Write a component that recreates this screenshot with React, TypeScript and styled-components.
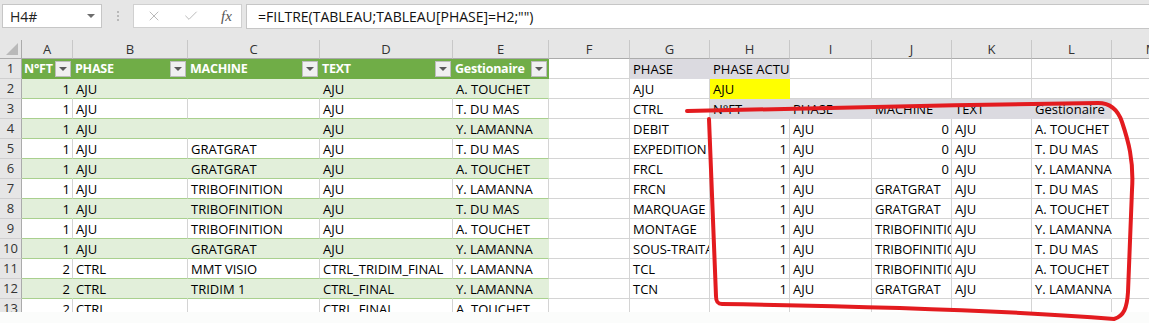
import React from 'react';
import styled, { createGlobalStyle } from 'styled-components';
import { X, Check } from 'lucide-react';

const GREEN = '#70ad47';
const BAND = '#e2efda';
const GREEN_LINE = '#a9d08e';
const GRID = '#d4d4d4';
const GRAY = '#dbdae0';
const YELLOW = '#ffff00';

const GlobalStyle = createGlobalStyle`
  html, body { margin: 0; padding: 0; background: #fbfcfb; }
  body { font-family: "Open Sans", "Noto Sans", sans-serif; }
  #root { width: 1149px; height: 323px; overflow: hidden; }
`;

const Page = styled.div`
  position: relative;
  width: 1149px;
  height: 323px;
  overflow: hidden;
  background: #fbfcfb;
`;

const Toolbar = styled.div`
  height: 40px;
  background: #e6e6e6;
  display: flex;
  align-items: flex-start;
  padding-top: 4px;
  box-sizing: border-box;
`;

const NameBox = styled.div`
  margin-left: 2px;
  width: 100px;
  height: 24px;
  box-sizing: border-box;
  background: #fff;
  border: 1px solid #c6c6c6;
  display: flex;
  align-items: center;
  justify-content: space-between;
  padding: 0 6px 0 7px;
  font-size: 14px;
  color: #222;
`;

const SmallArrow = styled.span`
  width: 0;
  height: 0;
  border-left: 4px solid transparent;
  border-right: 4px solid transparent;
  border-top: 4px solid #6d6d6d;
`;

const Grip = styled.div`
  width: 31px;
  height: 24px;
  display: flex;
  flex-direction: column;
  align-items: center;
  justify-content: center;
  gap: 2px;
`;

const Dot = styled.span`
  width: 2px;
  height: 2px;
  background: #b9b9b9;
`;

const ActionBox = styled.div`
  width: 109px;
  height: 24px;
  box-sizing: border-box;
  background: #fff;
  border: 1px solid #d0d0d0;
  display: flex;
  align-items: center;
  padding-left: 12px;
  gap: 21px;
  color: #b5b5b5;
`;

const Fx = styled.span`
  font-family: "Liberation Serif", serif;
  font-style: italic;
  font-size: 15px;
  color: #555;
  margin-left: 1px;
`;

const FormulaInput = styled.div`
  margin-left: 4px;
  flex: 1;
  height: 25px;
  box-sizing: border-box;
  background: #fff;
  border: 1px solid #c6c6c6;
  border-right: none;
  display: flex;
  align-items: center;
  padding-left: 11px;
  font-size: 14px;
  color: #111;
  white-space: nowrap;
`;

const Sheet = styled.div`
  display: grid;
  grid-template-columns: 22px 51px 115px 132px 133px 96px 81px 80px 80px 82px 80px 80px 80px 80px;
  grid-template-rows: 19px;
  grid-auto-rows: 20px;
  height: 272px;
  overflow: hidden;
  background: #fff;
`;

const Corner = styled.div`
  background: #e6e6e6;
  border-right: 1px solid #ababab;
  border-bottom: 1px solid #ababab;
  box-sizing: border-box;
  display: flex;
  align-items: flex-end;
  justify-content: flex-end;
  padding: 0 3px 3px 0;
`;

const CornerMark = styled.span`
  width: 0;
  height: 0;
  border-left: 12px solid transparent;
  border-bottom: 12px solid #b9b9b9;
`;

const ColHead = styled.div`
  background: #e6e6e6;
  border-right: 1px solid #c8c8c8;
  border-bottom: 1px solid #ababab;
  box-sizing: border-box;
  text-align: center;
  font-size: 13px;
  line-height: 18px;
  color: #333;
`;

const RowHead = styled.div`
  background: #e6e6e6;
  border-right: 1px solid #ababab;
  border-bottom: 1px solid #cfcfcf;
  box-sizing: border-box;
  text-align: center;
  font-size: 13px;
  line-height: 19px;
  color: #333;
`;

type CellProps = {
  $bg?: string;
  $right?: string;
  $bottom?: string;
  $align?: 'left' | 'right';
  $bold?: boolean;
  $fg?: string;
  $spill?: boolean;
};

const Cell = styled.div<CellProps>`
  box-sizing: border-box;
  background: ${(p) => p.$bg || '#fff'};
  border-right: 1px solid ${(p) => p.$right || GRID};
  border-bottom: 1px solid ${(p) => p.$bottom || GRID};
  padding: 0 2px 0 3px;
  font-size: 13px;
  line-height: 20px;
  white-space: nowrap;
  overflow: ${(p) => (p.$spill ? 'visible' : 'hidden')};
  text-align: ${(p) => p.$align || 'left'};
  font-weight: ${(p) => (p.$bold ? 700 : 400)};
  color: ${(p) => p.$fg || '#000'};
`;

const HeadCell = styled(Cell)`
  display: flex;
  align-items: flex-start;
  justify-content: space-between;
  padding-right: 1px;
  padding-left: 2px;
  font-size: 12.5px;
  letter-spacing: -0.25px;
`;

const FilterBtn = styled.span`
  flex: none;
  margin-top: 2px;
  width: 16px;
  height: 16px;
  box-sizing: border-box;
  background: #f0f0f0;
  border: 1px solid #bdbdbd;
  display: flex;
  align-items: center;
  justify-content: center;
`;

const FilterArrow = styled.span`
  width: 0;
  height: 0;
  border-left: 4px solid transparent;
  border-right: 4px solid transparent;
  border-top: 4px solid #5a5a5a;
`;

const Annotation = styled.svg`
  position: absolute;
  left: 0;
  top: 0;
  pointer-events: none;
`;

type Spec = {
  text?: string | number;
  align?: 'left' | 'right';
  bg?: string;
  right?: string;
  bottom?: string;
  bold?: boolean;
  fg?: string;
  spill?: boolean;
  filter?: boolean;
};

const LETTERS = ['A', 'B', 'C', 'D', 'E', 'F', 'G', 'H', 'I', 'J', 'K', 'L', 'M'];

const HEADERS = ['N°FT', 'PHASE', 'MACHINE', 'TEXT', 'Gestionaire'];

const LEFT_DATA: (string | number)[][] = [
  [1, 'AJU', '', 'AJU', 'A. TOUCHET'],
  [1, 'AJU', '', 'AJU', 'T. DU MAS'],
  [1, 'AJU', '', 'AJU', 'Y. LAMANNA'],
  [1, 'AJU', 'GRATGRAT', 'AJU', 'T. DU MAS'],
  [1, 'AJU', 'GRATGRAT', 'AJU', 'A. TOUCHET'],
  [1, 'AJU', 'TRIBOFINITION', 'AJU', 'Y. LAMANNA'],
  [1, 'AJU', 'TRIBOFINITION', 'AJU', 'T. DU MAS'],
  [1, 'AJU', 'TRIBOFINITION', 'AJU', 'A. TOUCHET'],
  [1, 'AJU', 'GRATGRAT', 'AJU', 'Y. LAMANNA'],
  [2, 'CTRL', 'MMT VISIO', 'CTRL_TRIDIM_FINAL', 'Y. LAMANNA'],
  [2, 'CTRL', 'TRIDIM 1', 'CTRL_FINAL', 'Y. LAMANNA'],
  [2, 'CTRL', '', 'CTRL_FINAL', 'A. TOUCHET'],
];

const PHASES = ['PHASE', 'AJU', 'CTRL', 'DEBIT', 'EXPEDITION', 'FRCL', 'FRCN', 'MARQUAGE', 'MONTAGE', 'SOUS-TRAITANCE', 'TCL', 'TCN', ''];

const RESULT: (string | number)[][] = [
  [1, 'AJU', 0, 'AJU', 'A. TOUCHET'],
  [1, 'AJU', 0, 'AJU', 'T. DU MAS'],
  [1, 'AJU', 0, 'AJU', 'Y. LAMANNA'],
  [1, 'AJU', 'GRATGRAT', 'AJU', 'T. DU MAS'],
  [1, 'AJU', 'GRATGRAT', 'AJU', 'A. TOUCHET'],
  [1, 'AJU', 'TRIBOFINITION', 'AJU', 'Y. LAMANNA'],
  [1, 'AJU', 'TRIBOFINITION', 'AJU', 'T. DU MAS'],
  [1, 'AJU', 'TRIBOFINITION', 'AJU', 'A. TOUCHET'],
  [1, 'AJU', 'GRATGRAT', 'AJU', 'Y. LAMANNA'],
];

function rowSpecs(r: number): Spec[] {
  const specs: Spec[] = [];
  if (r === 1) {
    HEADERS.forEach((h) =>
      specs.push({ text: h, bg: GREEN, right: GREEN, bottom: GREEN, bold: true, fg: '#fff', filter: true })
    );
  } else {
    const banded = r % 2 === 0;
    LEFT_DATA[r - 2].forEach((v) =>
      specs.push({
        text: v,
        align: typeof v === 'number' ? 'right' : 'left',
        bg: banded ? BAND : '#fff',
        right: banded ? BAND : GRID,
        bottom: GREEN_LINE,
      })
    );
  }
  specs.push({});
  if (r === 1) specs.push({ text: 'PHASE', bg: GRAY, right: GRAY, bottom: GRAY });
  else specs.push({ text: PHASES[r - 1] });
  if (r === 1) {
    specs.push({ text: 'PHASE ACTU', bg: GRAY, right: GRAY, bottom: GRAY });
    for (let i = 0; i < 4; i++) specs.push({});
  } else if (r === 2) {
    specs.push({ text: 'AJU', bg: YELLOW, right: YELLOW, bottom: YELLOW });
    for (let i = 0; i < 4; i++) specs.push({});
  } else if (r === 3) {
    HEADERS.forEach((h) => specs.push({ text: h, bg: GRAY, right: GRAY, bottom: GRAY }));
  } else if (r <= 12) {
    RESULT[r - 4].forEach((v, i) => {
      const spill = i === 4 && String(v).startsWith('Y.');
      specs.push({
        text: v,
        align: typeof v === 'number' ? 'right' : 'left',
        spill,
        right: spill ? '#fff' : GRID,
      });
    });
  } else {
    for (let i = 0; i < 5; i++) specs.push({});
  }
  specs.push({});
  return specs;
}

export default function App() {
  const rows = Array.from({ length: 13 }, (_, i) => i + 1);
  return (
    <Page>
      <GlobalStyle />
      <Toolbar>
        <NameBox>
          <span>H4#</span>
          <SmallArrow />
        </NameBox>
        <Grip>
          <Dot />
          <Dot />
          <Dot />
        </Grip>
        <ActionBox>
          <X size={16} strokeWidth={1.4} />
          <Check size={16} strokeWidth={1.4} />
          <Fx>fx</Fx>
        </ActionBox>
        <FormulaInput>=FILTRE(TABLEAU;TABLEAU[PHASE]=H2;"")</FormulaInput>
      </Toolbar>
      <Sheet>
        <Corner>
          <CornerMark />
        </Corner>
        {LETTERS.map((l) => (
          <ColHead key={l}>{l}</ColHead>
        ))}
        {rows.map((r) => (
          <React.Fragment key={r}>
            <RowHead>{r}</RowHead>
            {rowSpecs(r).map((s, i) =>
              s.filter ? (
                <HeadCell key={i} $bg={s.bg} $right={s.right} $bottom={s.bottom} $bold={s.bold} $fg={s.fg}>
                  <span>{s.text}</span>
                  <FilterBtn>
                    <FilterArrow />
                  </FilterBtn>
                </HeadCell>
              ) : (
                <Cell
                  key={i}
                  $bg={s.bg}
                  $right={s.right}
                  $bottom={s.bottom}
                  $align={s.align}
                  $bold={s.bold}
                  $fg={s.fg}
                  $spill={s.spill}
                >
                  {s.text}
                </Cell>
              )
            )}
          </React.Fragment>
        ))}
      </Sheet>
      <Annotation width={1149} height={323} viewBox="0 0 1149 323">
        <path
          d="M 687 111 C 780 108, 960 105, 1098 103 C 1110 103, 1118 110, 1122 122 C 1128 140, 1134 160, 1132 190 L 1128 292 C 1127 308, 1124 316, 1114 319 C 1000 310, 860 306, 722 304 C 717 304, 716 301, 716 296 L 709 119"
          fill="none"
          stroke="#e31b1f"
          strokeWidth={4}
          strokeLinecap="round"
          strokeLinejoin="round"
        />
      </Annotation>
    </Page>
  );
}
